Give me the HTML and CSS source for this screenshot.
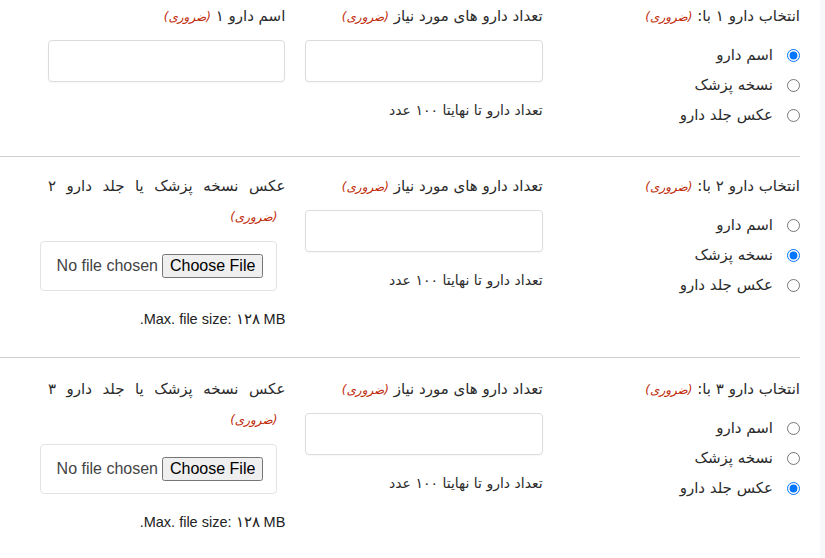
FILE: index.html
```html
<!DOCTYPE html>
<html lang="fa" dir="rtl">
<head>
<meta charset="utf-8">
<title>فرم دارو</title>
<link rel="stylesheet" href="styles.css">
</head>
<body>
<div class="page">
  <main class="form">
    <section class="row row-first">
      <div class="field">
        <div class="label">انتخاب دارو ۱ با: <span class="req">(ضروری)</span></div>
        <ul class="choices">
          <li><input type="radio" name="d1" id="d1a" checked><label for="d1a">اسم دارو</label></li>
          <li><input type="radio" name="d1" id="d1b"><label for="d1b">نسخه پزشک</label></li>
          <li><input type="radio" name="d1" id="d1c"><label for="d1c">عکس جلد دارو</label></li>
        </ul>
      </div>
      <div class="field">
        <div class="label">تعداد دارو های مورد نیاز <span class="req">(ضروری)</span></div>
        <input class="text" type="text">
        <div class="help">تعداد دارو تا نهایتا ۱۰۰ عدد</div>
      </div>
      <div class="field">
        <div class="label">اسم دارو ۱ <span class="req">(ضروری)</span></div>
        <input class="text" type="text">
      </div>
    </section>

    <section class="row">
      <div class="field">
        <div class="label">انتخاب دارو ۲ با: <span class="req">(ضروری)</span></div>
        <ul class="choices">
          <li><input type="radio" name="d2" id="d2a"><label for="d2a">اسم دارو</label></li>
          <li><input type="radio" name="d2" id="d2b" checked><label for="d2b">نسخه پزشک</label></li>
          <li><input type="radio" name="d2" id="d2c"><label for="d2c">عکس جلد دارو</label></li>
        </ul>
      </div>
      <div class="field">
        <div class="label">تعداد دارو های مورد نیاز <span class="req">(ضروری)</span></div>
        <input class="text" type="text">
        <div class="help">تعداد دارو تا نهایتا ۱۰۰ عدد</div>
      </div>
      <div class="field">
        <div class="label label-justify">عکس نسخه پزشک یا جلد دارو ۲ <span class="req req-wrap">(ضروری)</span></div>
        <div class="filebox"><input class="file" type="file"></div>
        <div class="maxsize">Max. file size: ۱۲۸ MB.</div>
      </div>
    </section>

    <section class="row row-last">
      <div class="field">
        <div class="label">انتخاب دارو ۳ با: <span class="req">(ضروری)</span></div>
        <ul class="choices">
          <li><input type="radio" name="d3" id="d3a"><label for="d3a">اسم دارو</label></li>
          <li><input type="radio" name="d3" id="d3b"><label for="d3b">نسخه پزشک</label></li>
          <li><input type="radio" name="d3" id="d3c" checked><label for="d3c">عکس جلد دارو</label></li>
        </ul>
      </div>
      <div class="field">
        <div class="label">تعداد دارو های مورد نیاز <span class="req">(ضروری)</span></div>
        <input class="text" type="text">
        <div class="help">تعداد دارو تا نهایتا ۱۰۰ عدد</div>
      </div>
      <div class="field">
        <div class="label label-justify">عکس نسخه پزشک یا جلد دارو ۳ <span class="req req-wrap">(ضروری)</span></div>
        <div class="filebox"><input class="file" type="file"></div>
        <div class="maxsize">Max. file size: ۱۲۸ MB.</div>
      </div>
    </section>
  </main>
  <div class="side"></div>
</div>
</body>
</html>
```

FILE: styles.css
```css
html, body {
  margin: 0;
  padding: 0;
  background: #fff;
}

body {
  font-family: "DejaVu Sans", sans-serif;
  color: #2b2b2b;
  font-size: 15px;
}

.page {
  display: flex;
  direction: ltr;
  min-height: 558px;
  overflow: hidden;
}

.form {
  direction: rtl;
  width: 820px;
  flex: none;
  background: #fff;
}

.side {
  flex: 1;
  background: #f8f8fb;
}

.row {
  margin-right: 20px;
  padding: 14px 0 28px 48px;
  border-bottom: 1px solid #cfcfcf;
  display: grid;
  grid-template-columns: repeat(3, 1fr);
  column-gap: 20px;
  align-items: start;
}

.row-first {
  padding-top: 1px;
  padding-bottom: 26px;
}

.row-last {
  padding-top: 16px;
  border-bottom: none;
}

.field {
  min-width: 0;
}

.label {
  font-size: 15px;
  line-height: 30px;
}

.label-justify {
  text-align: justify;
}

.req {
  font-size: 12px;
  line-height: 1;
  color: #c02b0a;
  font-style: italic;
}

.req-wrap {
  display: inline-block;
  margin-right: 8px;
}

.choices {
  list-style: none;
  margin: 9px 0 0;
  padding: 0;
}

.choices li {
  display: flex;
  align-items: center;
  height: 30px;
  font-size: 15px;
}

.choices input {
  width: 13px;
  height: 13px;
  margin: 0 0 0 14px;
  flex: none;
}

.text {
  display: block;
  box-sizing: border-box;
  width: 100%;
  height: 42px;
  margin: 9px 0 0;
  border: 1px solid #dcdcdc;
  border-radius: 4px;
  box-shadow: 0 1px 2px rgba(0, 0, 0, 0.04);
  background: #fff;
}

.help {
  margin-top: 18px;
  font-size: 14px;
  line-height: 20px;
}

.filebox {
  box-sizing: border-box;
  height: 50px;
  margin: 10px 8px 0 -8px;
  padding: 0 13px 0 14px;
  border: 1px solid #e3e3e3;
  border-radius: 4px;
  display: flex;
  align-items: center;
}

.file {
  font-family: "Liberation Sans", Arial, sans-serif;
  font-size: 16px;
  color: #444;
  direction: rtl;
  width: 100%;
}

.maxsize {
  margin-top: 18px;
  font-family: "Liberation Sans", Arial, sans-serif;
  font-size: 14.5px;
  line-height: 20px;
  color: #222;
}
```
